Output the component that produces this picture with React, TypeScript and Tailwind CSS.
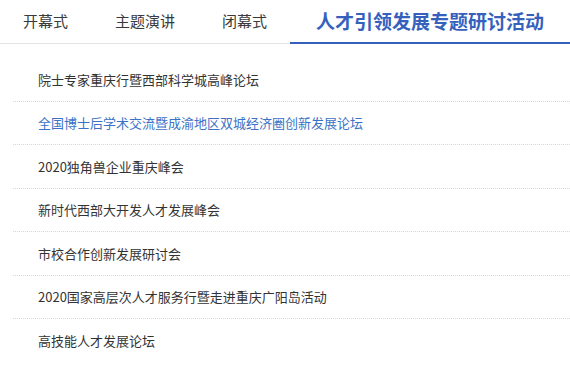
import React from "react";

const tabs = [
  { label: "开幕式", width: "w-[91px]" },
  { label: "主题演讲", width: "w-[108px]" },
  { label: "闭幕式", width: "w-[91px]" }
];

const items = [
  { title: "院士专家重庆行暨西部科学城高峰论坛" },
  { title: "全国博士后学术交流暨成渝地区双城经济圈创新发展论坛", active: true },
  { title: "2020独角兽企业重庆峰会" },
  { title: "新时代西部大开发人才发展峰会" },
  { title: "市校合作创新发展研讨会" },
  { title: "2020国家高层次人才服务行暨走进重庆广阳岛活动" },
  { title: "高技能人才发展论坛" }
];

export default function App() {
  return (
    <div
      className="w-[570px] h-[369px] bg-white overflow-hidden"
      style={{ fontFamily: '"Noto Sans CJK SC", "Microsoft YaHei", sans-serif' }}
    >
      <div className="flex h-[44px] border-b border-[#e4e4e4]">
        {tabs.map((tab) => (
          <div
            key={tab.label}
            className={`${tab.width} flex items-center justify-center text-[15px] text-[#3a3a3a]`}
          >
            {tab.label}
          </div>
        ))}
        <div className="flex-1 flex items-center justify-center border-b-2 border-[#3561bd] -mb-px text-[19px] font-bold text-[#3561bd]">
          人才引领发展专题研讨活动
        </div>
      </div>

      <ul className="mt-[14px] ml-[13px]">
        {items.map((item, i) => (
          <li
            key={item.title}
            className={`h-[43.5px] flex items-center pl-[25px] text-[13px] ${
              i < items.length - 1 ? "border-b border-dotted border-[#d6d6d6]" : ""
            } ${item.active ? "text-[#3b72c5]" : "text-[#333]"}`}
          >
            {item.title}
          </li>
        ))}
      </ul>
    </div>
  );
}
